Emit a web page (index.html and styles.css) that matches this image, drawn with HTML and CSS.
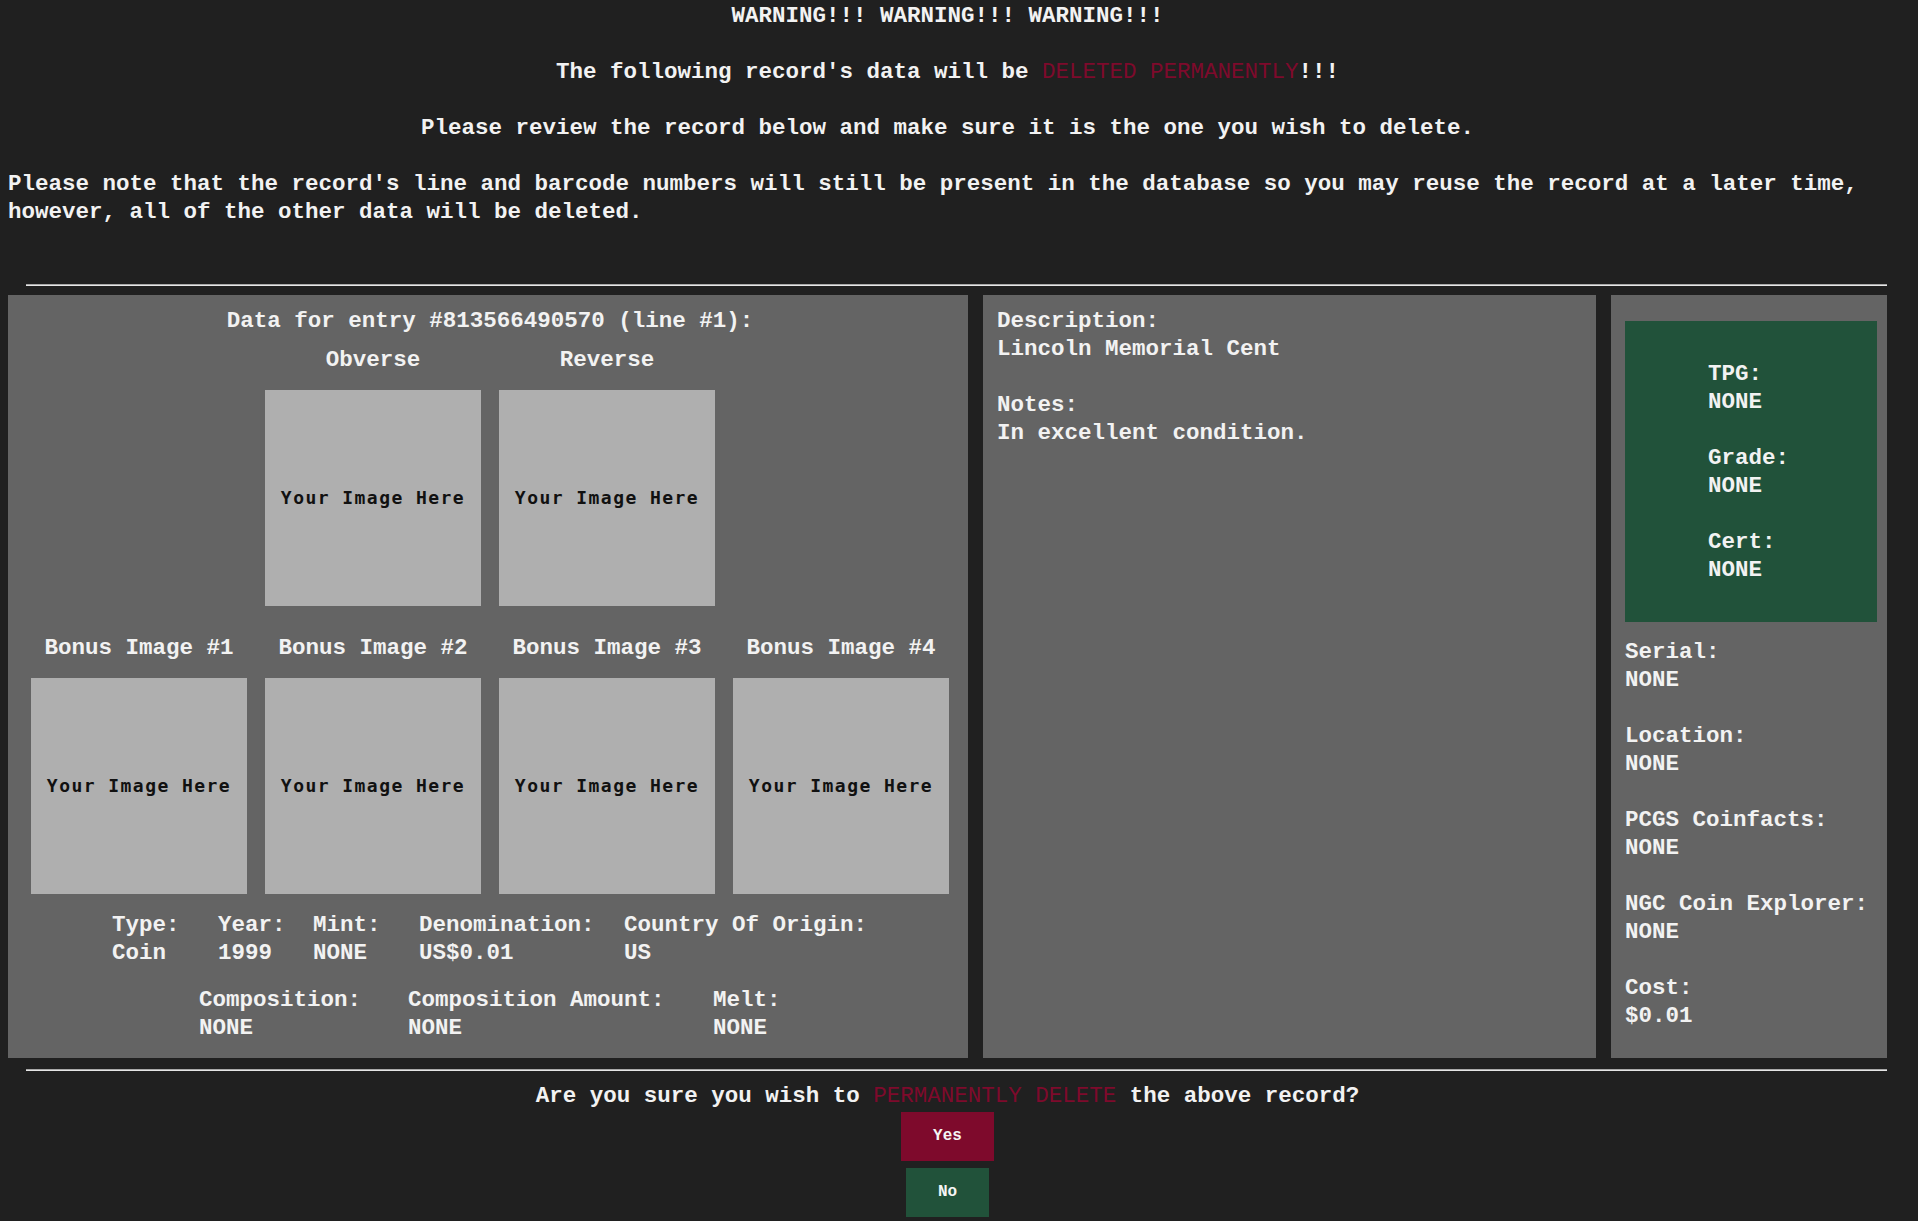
FILE: index.html
```html
<!DOCTYPE html>
<html lang="en">
<head>
<meta charset="utf-8">
<title>Delete Record</title>
<link rel="stylesheet" href="styles.css">
</head>
<body>
<div class="page">
  <div class="intro">
    <p class="center">WARNING!!! WARNING!!! WARNING!!!</p>
    <p class="center">The following record's data will be <span class="danger">DELETED PERMANENTLY</span>!!!</p>
    <p class="center">Please review the record below and make sure it is the one you wish to delete.</p>
    <p>Please note that the record's line and barcode numbers will still be present in the database so you may reuse the record at a later time, however, all of the other data will be deleted.</p>
  </div>

  <hr class="rule rule-top">

  <div class="panels">
    <section class="panel media">
      <h2 class="entry-title">Data for entry #813566490570 (line #1):</h2>

      <div class="gallery gallery-main">
        <figure class="shot col-2">
          <figcaption>Obverse</figcaption>
          <div class="placeholder"><span>Your Image Here</span></div>
        </figure>
        <figure class="shot col-3">
          <figcaption>Reverse</figcaption>
          <div class="placeholder"><span>Your Image Here</span></div>
        </figure>
      </div>

      <div class="gallery gallery-bonus">
        <figure class="shot">
          <figcaption>Bonus Image #1</figcaption>
          <div class="placeholder"><span>Your Image Here</span></div>
        </figure>
        <figure class="shot">
          <figcaption>Bonus Image #2</figcaption>
          <div class="placeholder"><span>Your Image Here</span></div>
        </figure>
        <figure class="shot">
          <figcaption>Bonus Image #3</figcaption>
          <div class="placeholder"><span>Your Image Here</span></div>
        </figure>
        <figure class="shot">
          <figcaption>Bonus Image #4</figcaption>
          <div class="placeholder"><span>Your Image Here</span></div>
        </figure>
      </div>

      <div class="facts facts-1">
        <div class="fact"><span>Type:</span><span>Coin</span></div>
        <div class="fact"><span>Year:</span><span>1999</span></div>
        <div class="fact"><span>Mint:</span><span>NONE</span></div>
        <div class="fact"><span>Denomination:</span><span>US$0.01</span></div>
        <div class="fact"><span>Country Of Origin:</span><span>US</span></div>
      </div>

      <div class="facts facts-2">
        <div class="fact"><span>Composition:</span><span>NONE</span></div>
        <div class="fact"><span>Composition Amount:</span><span>NONE</span></div>
        <div class="fact"><span>Melt:</span><span>NONE</span></div>
      </div>
    </section>

    <section class="panel desc">
      <div class="field"><span>Description:</span><span>Lincoln Memorial Cent</span></div>
      <div class="field"><span>Notes:</span><span>In excellent condition.</span></div>
    </section>

    <section class="panel side">
      <div class="grading">
        <div class="field"><span>TPG:</span><span>NONE</span></div>
        <div class="field"><span>Grade:</span><span>NONE</span></div>
        <div class="field"><span>Cert:</span><span>NONE</span></div>
      </div>
      <div class="side-list">
        <div class="field"><span>Serial:</span><span>NONE</span></div>
        <div class="field"><span>Location:</span><span>NONE</span></div>
        <div class="field"><span>PCGS Coinfacts:</span><span>NONE</span></div>
        <div class="field"><span>NGC Coin Explorer:</span><span>NONE</span></div>
        <div class="field"><span>Cost:</span><span>$0.01</span></div>
      </div>
    </section>
  </div>

  <hr class="rule rule-bottom">

  <p class="confirm">Are you sure you wish to <span class="danger">PERMANENTLY DELETE</span> the above record?</p>

  <div class="actions">
    <button class="btn btn-yes" type="button">Yes</button>
    <button class="btn btn-no" type="button">No</button>
  </div>
</div>
</body>
</html>
```

FILE: styles.css
```css
html, body {
  margin: 0;
  padding: 0;
  background: #202020;
}

body {
  color: #f2f2f2;
  font-family: "Liberation Mono", "Courier New", monospace;
  font-weight: bold;
  font-size: 22.5px;
  line-height: 28px;
}

.page {
  width: 1879px;
  margin-left: 8px;
  padding-top: 2px;
}

.intro p {
  margin: 0 0 28px 0;
}

.intro p:last-child {
  margin-bottom: 0;
}

.center {
  text-align: center;
}

.danger {
  color: #7e0a2c;
  font-weight: normal;
}

.rule {
  border: 0;
  border-top: 1px solid #a8a8a8;
  border-bottom: 1px solid #e6e6e6;
  height: 0;
  margin-right: 0;
  margin-left: 18px;
}

.rule-top {
  margin-top: 58px;
  margin-bottom: 9px;
}

.rule-bottom {
  margin-top: 11px;
  margin-bottom: 11px;
}

.panels {
  display: flex;
  align-items: stretch;
  gap: 15px;
}

.panel {
  background: #646464;
  box-sizing: border-box;
}

.media {
  width: 960px;
  padding: 12px 0 16px 4px;
}

.desc {
  width: 613px;
  padding: 12px 14px 0 14px;
}

.side {
  width: 276px;
  padding: 26px 10px 0 14px;
}

.entry-title {
  margin: 0;
  font-size: inherit;
  font-weight: inherit;
  text-align: center;
}

.gallery {
  display: grid;
  grid-template-columns: repeat(4, 216px);
  column-gap: 18px;
  justify-content: center;
}

.gallery-main {
  margin-top: 11px;
}

.gallery-bonus {
  margin-top: 28px;
}

.col-2 { grid-column: 2; }
.col-3 { grid-column: 3; }

.shot {
  margin: 0;
  display: flex;
  flex-direction: column;
  align-items: center;
}

.shot figcaption {
  white-space: nowrap;
  text-align: center;
}

.placeholder {
  margin-top: 16px;
  width: 216px;
  height: 216px;
  background: #afafaf;
  display: flex;
  align-items: center;
  justify-content: center;
}

.placeholder span {
  font-family: "DejaVu Sans Mono", monospace;
  font-weight: bold;
  font-size: 18px;
  letter-spacing: 1.45px;
  color: #111111;
  line-height: 20px;
  white-space: nowrap;
}

.facts {
  display: grid;
  justify-content: center;
}

.facts-1 {
  margin-top: 17px;
  grid-template-columns: 106px 95px 106px 205px 244px;
}

.facts-2 {
  margin-top: 19px;
  grid-template-columns: 209px 305px 68px;
}

.fact span,
.field span {
  display: block;
  white-space: nowrap;
}

.desc .field + .field {
  margin-top: 28px;
}

.grading {
  background: #21523a;
  padding: 39px 0 38px 83px;
}

.grading .field + .field {
  margin-top: 28px;
}

.side-list {
  margin-top: 16px;
}

.side-list .field + .field {
  margin-top: 28px;
}

.confirm {
  margin: 0;
  text-align: center;
}

.actions {
  margin-top: 2px;
  display: flex;
  flex-direction: column;
  align-items: center;
  gap: 7px;
}

.btn {
  font-family: "Liberation Mono", "Courier New", monospace;
  font-weight: bold;
  font-size: 16px;
  color: #f5f5f5;
  border: 0;
  height: 49px;
  line-height: 49px;
  padding: 0 32px;
  margin: 0;
  cursor: pointer;
}

.btn-yes {
  background: #7e0a2c;
}

.btn-no {
  background: #21523a;
}
```
